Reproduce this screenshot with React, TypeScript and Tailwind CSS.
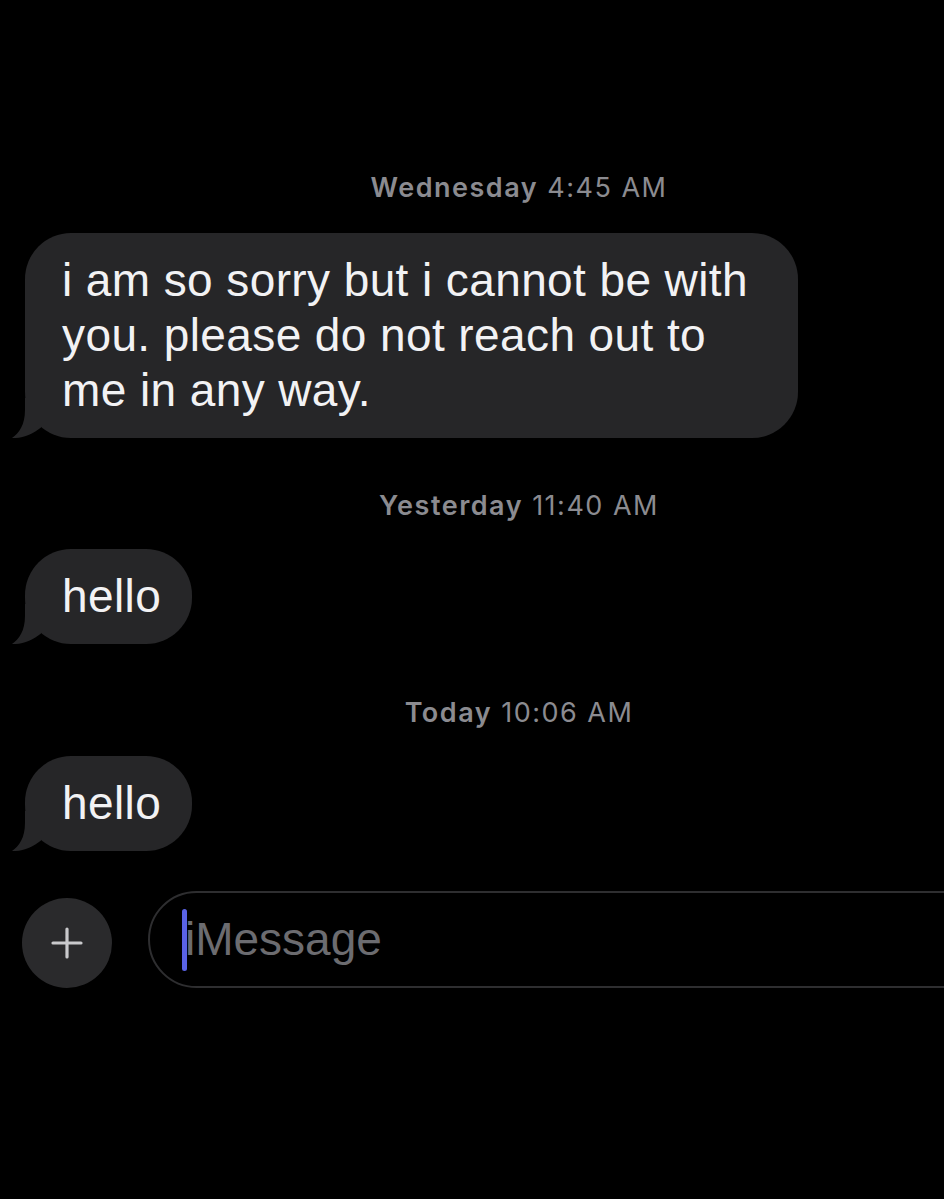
const font = { fontFamily: '"Liberation Sans", Arial, sans-serif' };
const stampFont = { fontFamily: 'Inter, "Liberation Sans", sans-serif' };

function Stamp({ day, time }: { day: string; time: string }) {
  return (
    <div
      className="pl-[94px] text-center text-[27px] leading-none tracking-[1.5px] text-[#8b8b90]"
      style={stampFont}
    >
      <span className="font-semibold">{day}</span> {time}
    </div>
  );
}

function Tail() {
  return (
    <svg
      aria-hidden
      viewBox="0 0 50 40"
      className="absolute bottom-0 left-[-14px] h-[40px] w-[50px]"
    >
      <path d="M14 0 L14 12 C14 27 8 35 1 40 C12 40.5 22 36 30 29.5 L30 0 Z" fill="#262628" />
    </svg>
  );
}

function Bubble({ children, className }: { children: React.ReactNode; className: string }) {
  return (
    <div
      className={`relative ml-[25px] rounded-[46px] bg-[#262628] py-5 pl-[37px] text-[46px] leading-[55px] tracking-[0.4px] text-[#f2f2f4] ${className}`}
    >
      <Tail />
      <span className="relative">{children}</span>
    </div>
  );
}

export default function App() {
  return (
    <div className="flex h-[1199px] w-[944px] flex-col overflow-hidden bg-black" style={font}>
      <div className="pt-[174px]">
        <Stamp day="Wednesday" time="4:45 AM" />
      </div>
      <Bubble className="mt-[32px] w-[773px]">
        i am so sorry but i cannot be with
        <br />
        you. please do not reach out to
        <br />
        me in any way.
      </Bubble>
      <div className="mt-[54px]">
        <Stamp day="Yesterday" time="11:40 AM" />
      </div>
      <Bubble className="mt-[30px] w-[167px]">hello</Bubble>
      <div className="mt-[55px]">
        <Stamp day="Today" time="10:06 AM" />
      </div>
      <Bubble className="mt-[30px] w-[167px]">hello</Bubble>

      <div className="mt-[40px] flex items-center gap-[36px] pl-[22px]">
        <button
          type="button"
          className="mt-[6px] flex h-[90px] w-[90px] shrink-0 items-center justify-center rounded-full bg-[#2a2a2c]"
        >
          <svg viewBox="0 0 40 40" className="h-[40px] w-[40px]" aria-hidden>
            <path d="M20 6 V34 M6 20 H34" stroke="#c9c9cc" strokeWidth="3.2" strokeLinecap="round" />
          </svg>
        </button>
        <div className="mr-[-60px] flex h-[97px] flex-1 items-center rounded-l-full border-2 border-[#2e2e30] pl-[32px]">
          <span className="h-[62px] w-[5px] shrink-0 rounded-full bg-[#5a63e6]" />
          <span className="ml-[-2px] text-[46px] text-[#6c6c70]">iMessage</span>
        </div>
      </div>
    </div>
  );
}
